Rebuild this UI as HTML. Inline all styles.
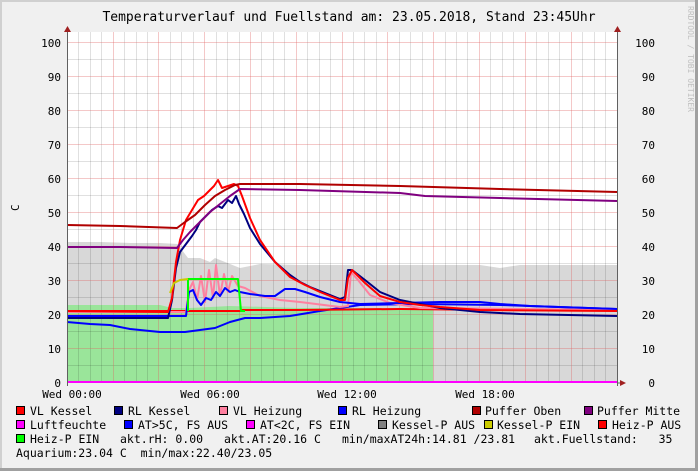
<!DOCTYPE html>
<html><head><meta charset="utf-8"><style>
html,body{margin:0;padding:0;background:#f0f0f0;}
svg{display:block;}
text{font-family:"DejaVu Sans Mono","Liberation Mono",monospace;white-space:pre;}
</style></head><body>
<svg width="698" height="471" viewBox="0 0 698 471" xmlns="http://www.w3.org/2000/svg">
<rect x="0" y="0" width="698" height="471" fill="#f0f0f0"/>
<rect x="0" y="0" width="698" height="2" fill="#d0d0d0"/>
<rect x="0" y="0" width="2" height="471" fill="#d0d0d0"/>
<rect x="695" y="0" width="3" height="471" fill="#a0a0a0"/>
<rect x="0" y="468" width="698" height="3" fill="#a0a0a0"/>
<text x="349" y="21" font-size="13" text-anchor="middle" fill="#000">Temperaturverlauf und Fuellstand am: 23.05.2018, Stand 23:45Uhr</text>
<text transform="translate(688,6) rotate(90)" font-size="8" fill="#c0c0c0">RRDTOOL / TOBI OETIKER</text>
<text transform="translate(19,211) rotate(-90)" font-size="11" fill="#000">C</text>
<rect x="67" y="32" width="550" height="351" fill="#fff"/>
<polygon fill="#d8d8d8" points="67,383 67,242 100,242 130,243 160,243 178,244 182,250 188,258 200,258 210,262 215,258 225,262 240,268 260,264 300,265 360,265 420,265 480,265 500,268 520,265 617,265 617,383"/>
<polygon fill="#9ae59a" points="67,383 67,305 160,305 172,308 190,308 230,306 300,308 380,308 433,308 433,383"/>
<g stroke="#000" stroke-opacity="0.12" stroke-width="1">
<path d="M67.5 365.5H617M67.5 331.5H617M67.5 297.5H617M67.5 263.5H617M67.5 229.5H617M67.5 195.5H617M67.5 161.5H617M67.5 127.5H617M67.5 93.5H617M67.5 59.5H617"/>
<path d="M78.5 32V383M90.5 32V383M101.5 32V383M124.5 32V383M136.5 32V383M147.5 32V383M170.5 32V383M181.5 32V383M193.5 32V383M216.5 32V383M227.5 32V383M239.5 32V383M261.5 32V383M273.5 32V383M284.5 32V383M307.5 32V383M319.5 32V383M330.5 32V383M353.5 32V383M364.5 32V383M376.5 32V383M399.5 32V383M410.5 32V383M422.5 32V383M445.5 32V383M456.5 32V383M467.5 32V383M490.5 32V383M502.5 32V383M513.5 32V383M536.5 32V383M548.5 32V383M559.5 32V383M582.5 32V383M594.5 32V383M605.5 32V383"/>
</g>
<g stroke="#e06060" stroke-opacity="0.35" stroke-width="1">
<path d="M67.5 348.5H617M67.5 314.5H617M67.5 280.5H617M67.5 246.5H617M67.5 212.5H617M67.5 178.5H617M67.5 144.5H617M67.5 110.5H617M67.5 76.5H617M67.5 42.5H617"/>
<path d="M113.5 32V383M158.5 32V383M204.5 32V383M250.5 32V383M296.5 32V383M342.5 32V383M387.5 32V383M433.5 32V383M479.5 32V383M525.5 32V383M571.5 32V383"/>
</g>
<g fill="none" stroke-width="2" stroke-linejoin="round">
<polyline stroke="#0000ff" points="67,322 90,324 110,325 130,329 160,332 185,332 200,330 215,328 230,322 245,318 260,318 290,316 320,311 340,308 360,305 420,304 500,305 617,309"/>
<polyline stroke="#ff0000" points="67,311 240,311 242,310 300,310 400,309 500,310 617,310"/>
<polyline stroke="#ff80a0" points="67,312 186,312 189,290 193,282 197,300 201,276 205,302 209,270 213,298 216,265 220,296 224,274 228,292 232,276 238,286 245,288 260,296 280,300 300,302 340,307 348,306 351,272 358,280 370,295 390,303 420,308 617,310"/>
<polyline stroke="#0000ff" points="67,316 186,316 189,292 193,290 197,300 201,305 206,298 211,300 216,292 220,296 225,288 230,292 235,290 240,292 250,294 265,296 275,296 285,289 295,289 305,292 320,297 340,302 360,304 400,303 440,302 480,302 500,304 530,306 617,309"/>
<polyline stroke="#000080" points="67,318 168,318 172,300 176,268 180,252 186,244 192,236 196,230 200,222 206,216 212,210 218,206 222,208 228,200 232,203 236,196 239,204 244,214 250,228 260,244 275,262 290,275 300,282 310,287 320,291 340,299 345,297 348,270 352,270 365,280 380,292 400,300 420,304 440,308 480,312 520,314 617,316"/>
<polyline stroke="#ff0000" points="67,311 168,312 172,298 176,262 180,240 186,220 192,210 198,200 204,196 210,190 214,186 218,180 222,188 228,186 234,184 238,186 242,196 250,218 260,240 275,262 290,277 305,285 320,292 340,300 345,300 348,278 352,270 365,283 380,296 400,302 420,305 440,307 480,310 617,311"/>
<polyline stroke="#b00000" points="67,225 120,226 177,228 185,222 195,215 205,205 215,196 225,190 235,185 240,184 300,184 400,186 500,189 617,192"/>
<polyline stroke="#800080" points="67,247 120,247 177,248 183,240 190,232 200,222 210,212 220,204 230,196 240,189 300,190 400,193 425,196 500,198 617,201"/>
<polyline stroke="#00ff00" points="188,311 188,279 238,279 241,311 245,311"/>
<polyline stroke="#cccc00" points="170,293 174,283 180,280 188,279"/>
<polyline stroke="#ff00ff" points="67,382 617,382"/>
</g>
<path d="M67.5 30V386M617.5 30V386" stroke="#606060" stroke-width="1"/>
<path d="M617 383H622" stroke="#606060"/>
<polygon points="64,32 71,32 67.5,26" fill="#a02020"/>
<polygon points="614,32 621,32 617.5,26" fill="#a02020"/>
<polygon points="620,380 620,386 626,383" fill="#a02020"/>
<g font-size="11" fill="#000" text-anchor="end">
<text x="61" y="47">100</text><text x="61" y="81">90</text><text x="61" y="115">80</text><text x="61" y="149">70</text><text x="61" y="183">60</text><text x="61" y="217">50</text><text x="61" y="251">40</text><text x="61" y="285">30</text><text x="61" y="319">20</text><text x="61" y="353">10</text><text x="61" y="387">0</text>
<text x="655" y="47">100</text><text x="655" y="81">90</text><text x="655" y="115">80</text><text x="655" y="149">70</text><text x="655" y="183">60</text><text x="655" y="217">50</text><text x="655" y="251">40</text><text x="655" y="285">30</text><text x="655" y="319">20</text><text x="655" y="353">10</text><text x="655" y="387">0</text>
</g>
<g font-size="11" fill="#000" text-anchor="middle">
<text x="72" y="398">Wed 00:00</text><text x="210" y="398">Wed 06:00</text><text x="347" y="398">Wed 12:00</text><text x="485" y="398">Wed 18:00</text>
</g>
<g stroke="#000" stroke-width="1">
<rect x="16.5" y="406.5" width="8" height="8" fill="#ff0000"/>
<rect x="114.5" y="406.5" width="8" height="8" fill="#000080"/>
<rect x="219.5" y="406.5" width="8" height="8" fill="#ff80a0"/>
<rect x="338.5" y="406.5" width="8" height="8" fill="#0000ff"/>
<rect x="472.5" y="406.5" width="8" height="8" fill="#b00000"/>
<rect x="584.5" y="406.5" width="8" height="8" fill="#800080"/>
<rect x="16.5" y="420.5" width="8" height="8" fill="#ff00ff"/>
<rect x="124.5" y="420.5" width="8" height="8" fill="#0000ff"/>
<rect x="246.5" y="420.5" width="8" height="8" fill="#ff00ff"/>
<rect x="378.5" y="420.5" width="8" height="8" fill="#808080"/>
<rect x="484.5" y="420.5" width="8" height="8" fill="#cccc00"/>
<rect x="598.5" y="420.5" width="8" height="8" fill="#ff0000"/>
<rect x="16.5" y="434.5" width="8" height="8" fill="#00ff00"/>
</g>
<g font-size="11.5" fill="#000">
<text x="30" y="415">VL Kessel</text>
<text x="128" y="415">RL Kessel</text>
<text x="233" y="415">VL Heizung</text>
<text x="352" y="415">RL Heizung</text>
<text x="485" y="415">Puffer Oben</text>
<text x="597" y="415">Puffer Mitte</text>
<text x="30" y="429">Luftfeuchte</text>
<text x="138" y="429">AT&gt;5C, FS AUS</text>
<text x="260" y="429">AT&lt;2C, FS EIN</text>
<text x="392" y="429">Kessel-P AUS</text>
<text x="497" y="429">Kessel-P EIN</text>
<text x="612" y="429">Heiz-P AUS</text>
<text x="30" y="443">Heiz-P EIN</text>
<text x="120" y="443">akt.rH: 0.00</text>
<text x="224" y="443">akt.AT:20.16 C</text>
<text x="342" y="443">min/maxAT24h:14.81 /23.81</text>
<text x="534" y="443">akt.Fuellstand:   35</text>
<text x="16" y="457">Aquarium:23.04 C  min/max:22.40/23.05</text>
</g>
</svg>
</body></html>
